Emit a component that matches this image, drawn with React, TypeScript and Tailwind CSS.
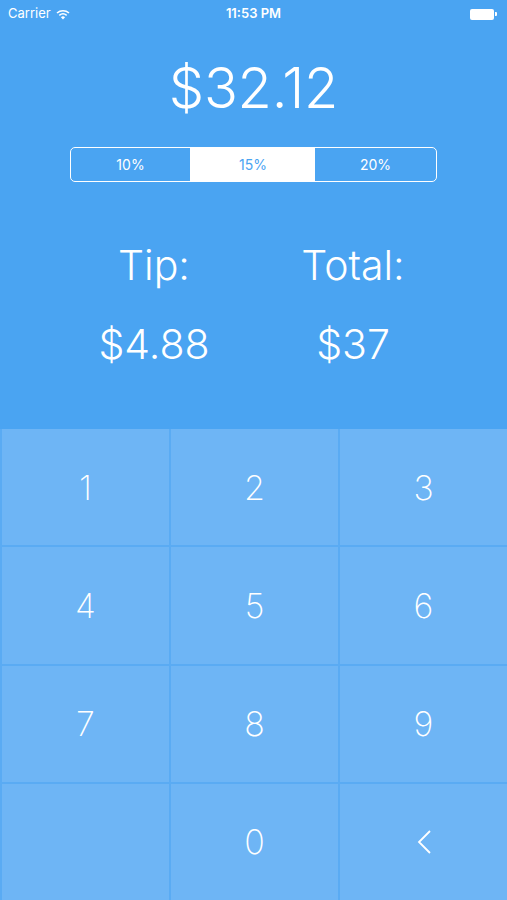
import React from "react";

const keys = ["1", "2", "3", "4", "5", "6", "7", "8", "9", "", "0", "<"];

export default function App() {
  return (
    <div
      className="w-[507px] h-[900px] bg-[#4aa4f2] flex flex-col text-white overflow-hidden"
      style={{ fontFamily: "Inter, 'Helvetica Neue', Roboto, sans-serif" }}
    >
      {/* status bar */}
      <div className="h-[28px] flex items-center justify-between px-[8px] text-[13px] relative">
        <div className="flex items-center gap-[5px]">
          <span className="font-normal">Carrier</span>
          <svg width="14" height="11" viewBox="0 0 14 11">
            <path d="M1 4 A9 9 0 0 1 13 4" stroke="white" strokeWidth="1.6" fill="none" />
            <path d="M3.3 6.3 A5.8 5.8 0 0 1 10.7 6.3" stroke="white" strokeWidth="1.6" fill="none" />
            <path d="M7 10.5 L4.9 8.3 A3 3 0 0 1 9.1 8.3 Z" fill="white" />
          </svg>
        </div>
        <span className="absolute left-1/2 -translate-x-1/2 font-semibold">11:53 PM</span>
        <div className="flex items-center mr-[2px]">
          <div className="w-[24px] h-[11px] bg-white rounded-[2px]" />
          <div className="w-[2px] h-[4px] bg-white rounded-r-[1px] ml-[1px]" />
        </div>
      </div>

      {/* amount */}
      <div className="flex justify-center mt-[26px]">
        <span className="text-[56px] font-light leading-[68px] tracking-[-0.3px]">$32.12</span>
      </div>

      {/* segmented control */}
      <div className="flex justify-center mt-[25px]">
        <div className="w-[367px] h-[35px] border border-white rounded-[5px] flex overflow-hidden text-[14px] font-normal">
          <div className="w-[120px] flex items-center justify-center border-r border-white">10%</div>
          <div className="w-[124px] flex items-center justify-center bg-white text-[#4aa4f2]">15%</div>
          <div className="flex-1 flex items-center justify-center">20%</div>
        </div>
      </div>

      {/* tip / total */}
      <div className="grid grid-cols-[1fr_1fr] w-[398px] mx-auto mt-[59px] text-[41px] font-light">
        <div className="flex flex-col items-center">
          <span className="leading-[48px]">Tip:</span>
          <span className="leading-[48px] mt-[31px]">$4.88</span>
        </div>
        <div className="flex flex-col items-center">
          <span className="leading-[48px]">Total:</span>
          <span className="leading-[48px] mt-[31px]">$37</span>
        </div>
      </div>

      {/* keypad */}
      <div className="mt-auto h-[471px] grid grid-cols-3 grid-rows-4 gap-[2px] pl-[2px] bg-[#5aabf3]">
        {keys.map((k, i) => (
          <div
            key={i}
            className="bg-[#6eb5f5] flex items-center justify-center text-[34px] font-extralight text-white"
          >
            {k === "<" ? (
              <svg width="16" height="26" viewBox="0 0 16 26">
                <path d="M14 2 L3 13 L14 24" stroke="white" strokeWidth="1.8" fill="none" />
              </svg>
            ) : (
              k
            )}
          </div>
        ))}
      </div>
    </div>
  );
}
